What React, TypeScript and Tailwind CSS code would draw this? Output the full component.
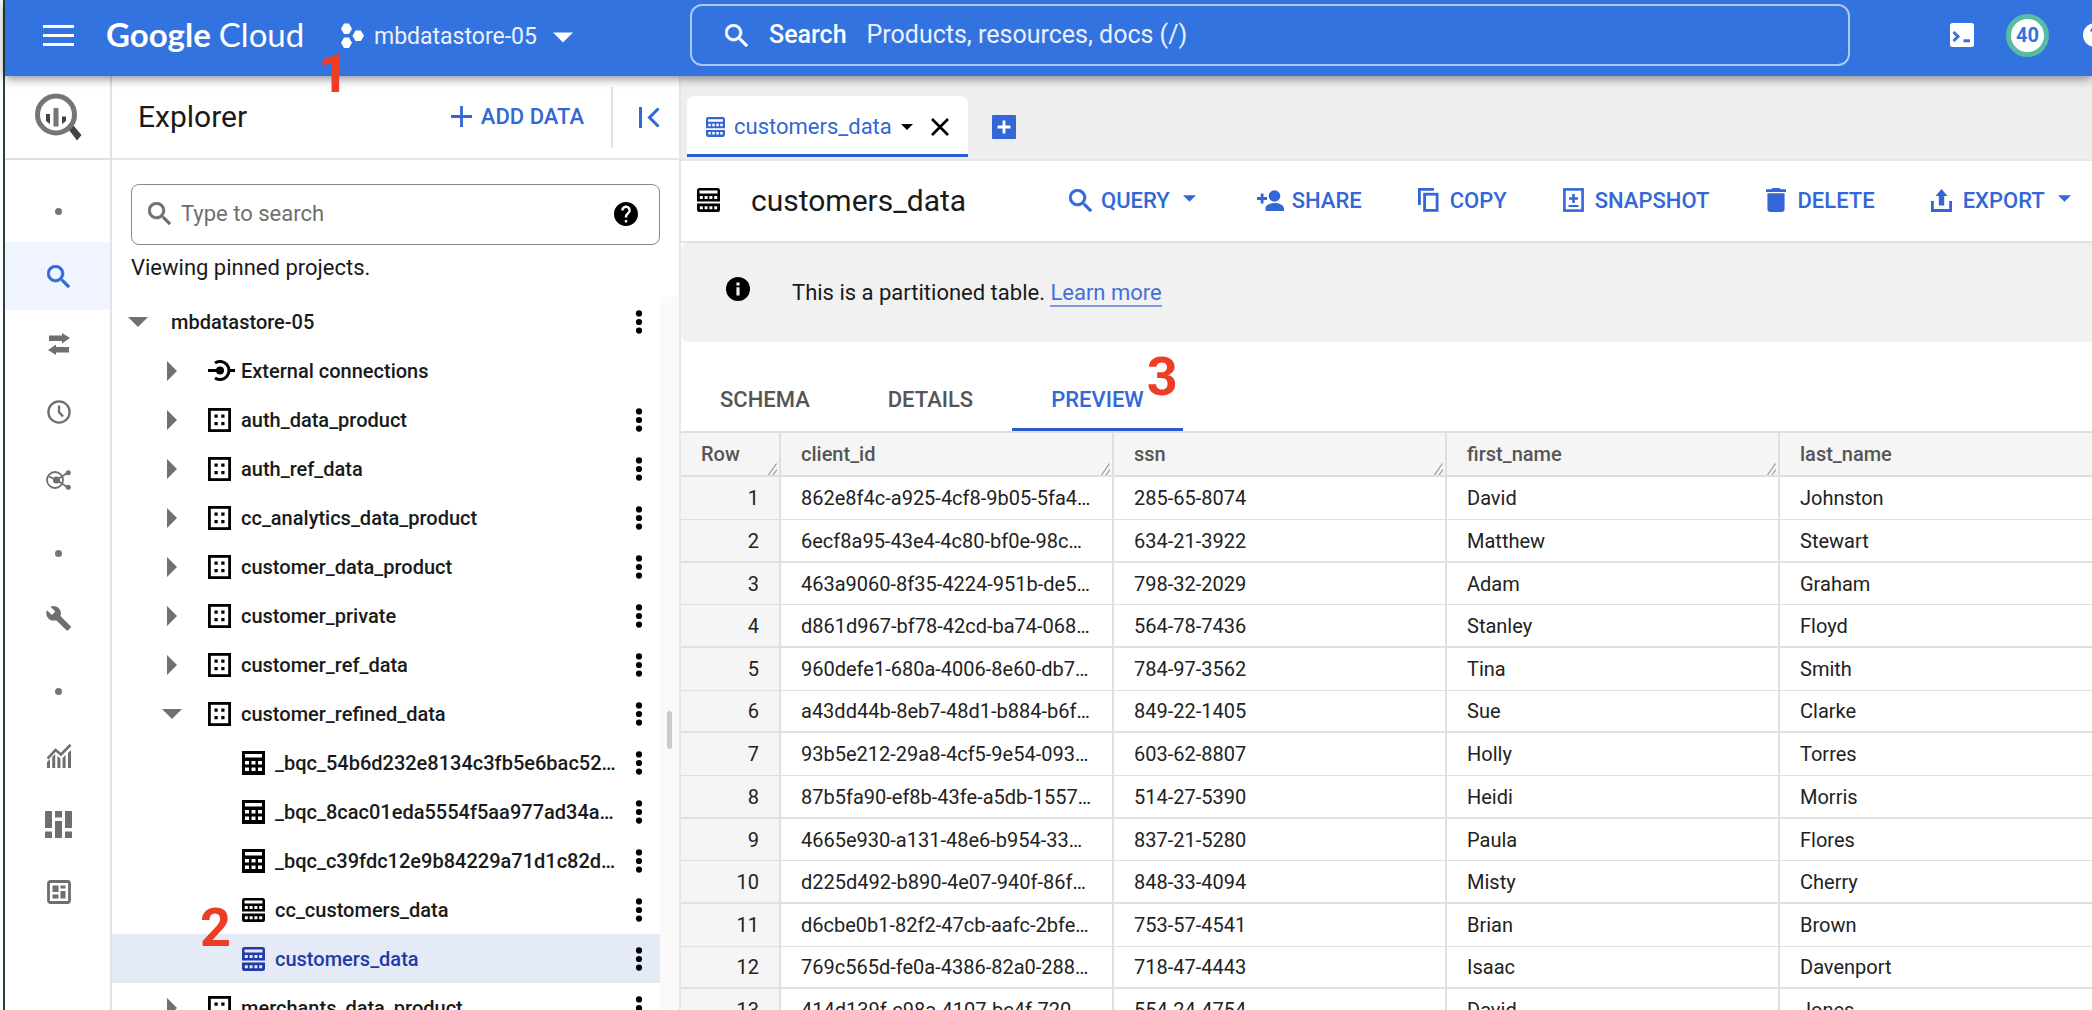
import React from "react";

type IconProps = { className?: string };

const SEARCH_PATH =
  "M15.5 14h-.79l-.28-.27A6.471 6.471 0 0 0 16 9.5 6.5 6.5 0 1 0 9.5 16c1.61 0 3.09-.59 4.23-1.57l.27.28v.79l5 4.99L20.49 19l-4.99-5zm-6 0C7.01 14 5 11.99 5 9.5S7.01 5 9.5 5 14 7.01 14 9.5 11.99 14 9.5 14z";

function SearchIcon({ className = "" }: IconProps) {
  return (
    <svg viewBox="3 3 17.5 17.5" className={`size-[23px] shrink-0 ${className}`} fill="currentColor" aria-hidden="true">
      <path d={SEARCH_PATH} stroke="currentColor" strokeWidth="0.4" />
    </svg>
  );
}

function CaretDown({ className = "" }: IconProps) {
  return (
    <svg viewBox="0 0 20 10" className={`shrink-0 ${className}`} fill="currentColor" aria-hidden="true">
      <path d="M0 0h20L10 10z" />
    </svg>
  );
}

function CaretRight() {
  return (
    <svg viewBox="0 0 10 20" className="h-5 w-[10px]" fill="currentColor" aria-hidden="true">
      <path d="M0 0v20l10-10z" />
    </svg>
  );
}

function HelpIcon({ className = "" }: IconProps) {
  return (
    <svg viewBox="2 2 20 20" className={`size-6 shrink-0 ${className}`} fill="currentColor" aria-hidden="true">
      <path d="M12 2C6.48 2 2 6.48 2 12s4.48 10 10 10 10-4.48 10-10S17.52 2 12 2zm1 17h-2v-2h2v2zm2.07-7.75l-.9.92C13.45 12.9 13 13.5 13 15h-2v-.5c0-1.1.45-2.1 1.17-2.83l1.24-1.26c.37-.36.59-.86.59-1.41 0-1.1-.9-2-2-2s-2 .9-2 2H8c0-2.21 1.79-4 4-4s4 1.79 4 4c0 .88-.36 1.68-.93 2.25z" />
    </svg>
  );
}

function InfoIcon() {
  return (
    <svg viewBox="2 2 20 20" className="size-6 shrink-0" aria-hidden="true">
      <circle cx="12" cy="12" r="10" fill="#000" />
      <path d="M10.700 6.500h2.600V9h-2.600zM10.700 10.600h2.600v6.900h-2.600z" fill="#f1f1f1" />
    </svg>
  );
}

function MoreDots() {
  return (
    <svg viewBox="0 0 8 24" className="h-6 w-2" fill="currentColor" aria-hidden="true">
      <circle cx="4" cy="3.400" r="3.100" />
      <circle cx="4" cy="12" r="3.100" />
      <circle cx="4" cy="20.600" r="3.100" />
    </svg>
  );
}

function DatasetIcon() {
  return (
    <svg viewBox="0 0 23 24" className="h-6 w-[23px] shrink-0" aria-hidden="true">
      <rect x="1.400" y="1.400" width="20.200" height="21.200" fill="none" stroke="currentColor" strokeWidth="2.800" />
      <path d="M6.500 6.500h3.200v3.200h-3.200zM13.300 6.500h3.200v3.200h-3.200zM6.500 14h3.200v3.200h-3.200zM13.300 14h3.200v3.200h-3.200z" fill="currentColor" />
    </svg>
  );
}

function TableIcon() {
  return (
    <svg viewBox="0 0 23 24" className="h-6 w-[23px] shrink-0" fill="currentColor" fillRule="evenodd" aria-hidden="true">
      <path d="M0 0h23v24H0zM3 3v3.500h17V3zM3 10v3.500h4V10zM9.500 10v3.500h4V10zM16 10v3.500h4V10zM3 16.500V20h4v-3.500zM9.500 16.500V20h4v-3.500zM16 16.500V20h4v-3.500z" />
    </svg>
  );
}

function PartitionedIcon({ className = "h-6 w-[23px]" }: IconProps) {
  return (
    <svg viewBox="0 0 23 24" className={`shrink-0 ${className}`} fill="currentColor" fillRule="evenodd" aria-hidden="true">
      <path d="M2.500 0h18A2.500 2.500 0 0 1 23 2.500V13.500H0V2.500A2.500 2.500 0 0 1 2.500 0zM2.500 2.500v3h18v-3zM2.800 8v3h3V8zM7.600 8v3h3V8zM12.400 8v3h3V8zM17.200 8v3h3V8z" />
      <path d="M0 15.500h23v6a2.500 2.500 0 0 1-2.500 2.500h-18A2.500 2.500 0 0 1 0 21.500zM2.800 18.200v3h3v-3zM7.600 18.200v3h3v-3zM12.400 18.200v3h3v-3zM17.200 18.200v3h3v-3z" />
    </svg>
  );
}

function ExternalIcon() {
  return (
    <svg viewBox="0 0 27 21" className="h-[21px] w-[27px] shrink-0" fill="none" stroke="currentColor" strokeWidth="3" aria-hidden="true">
      <path d="M0 10.500h11M20 10.500h7" />
      <path d="M7 3A9 9 0 1 1 7 18" />
      <circle cx="12" cy="10.500" r="4" fill="currentColor" stroke="none" />
    </svg>
  );
}

function BigQueryLogo() {
  return (
    <svg viewBox="0 0 47 49" className="h-[49px] w-[47px]" aria-hidden="true">
      <path d="M34 37l4.500-4.500L46.500 42l-4.500 5.500z" fill="#424242" />
      <circle cx="21" cy="21.500" r="18.500" fill="#fff" stroke="#757575" strokeWidth="5" />
      <path d="M11 21h4v10l-4-3z" fill="#424242" />
      <rect x="18.500" y="15" width="5" height="18.500" fill="#757575" />
      <path d="M27 23.500h4V28l-4 3z" fill="#424242" />
    </svg>
  );
}

const railIcons: Record<string, React.ReactNode> = {
  transfers: (
    <svg viewBox="0 0 22 22" className="size-[22px]" fill="currentColor" aria-hidden="true">
      <path d="M1 2.500h13V0l8 5-8 5.500V8H1zM21 14H8v-2.500l-8 5.500 8 5v-2.500h13z" />
    </svg>
  ),
  scheduled: (
    <svg viewBox="0 0 24 24" className="size-6" fill="none" stroke="currentColor" strokeWidth="2.300" aria-hidden="true">
      <circle cx="12" cy="12" r="10.600" />
      <path d="M12 5.500V12l4 4.500" />
    </svg>
  ),
  hub: (
    <svg viewBox="0 0 25 20" className="h-5 w-[25px]" fill="none" stroke="currentColor" strokeWidth="1.800" aria-hidden="true">
      <circle cx="9" cy="10" r="8" />
      <circle cx="10.500" cy="10" r="3.600" fill="currentColor" stroke="none" />
      <path d="M3 6.500l7.500 3.500L22 2.500M10.500 10L22 17.500" />
      <circle cx="22.300" cy="2.700" r="2.500" fill="currentColor" stroke="none" />
      <circle cx="22.300" cy="17.300" r="2.500" fill="currentColor" stroke="none" />
    </svg>
  ),
  admin: (
    <svg viewBox="0.700 1 22.300 22.300" className="size-[25px]" fill="currentColor" aria-hidden="true">
      <path d="M22.700 19l-9.100-9.100c.9-2.300.4-5-1.500-6.900-2-2-5-2.400-7.400-1.300L9 6 6 9 1.600 4.700C.4 7.100.9 10.100 2.900 12.100c1.900 1.900 4.600 2.400 6.900 1.500l9.100 9.100c.4.4 1 .4 1.400 0l2.300-2.300c.5-.4.5-1.100.1-1.400z" />
    </svg>
  ),
  monitoring: (
    <svg viewBox="0 0 24 24" className="size-6" aria-hidden="true">
      <path d="M0.500 14.500L8.500 6l5.500 4.500L23.500 0.800" fill="none" stroke="currentColor" strokeWidth="2.600" />
      <path d="M0 18l3-3v9H0zM5.200 13l3-3v14h-3zM10.400 12l3 2.500V24h-3zM15.600 14l3-3v13h-3zM21 9l3-3v18h-3z" fill="currentColor" />
    </svg>
  ),
  capacity: (
    <svg viewBox="0 0 27 27" className="size-[27px]" fill="currentColor" aria-hidden="true">
      <path d="M0 0h7v17H0zM0 20.500h7V27H0zM10 0h7v6.500h-7zM10 10h7v17h-7zM20 0h7v17h-7zM20 20.500h7V27h-7z" />
    </svg>
  ),
  engine: (
    <svg viewBox="0 0 24 24" className="size-6" fill="currentColor" aria-hidden="true">
      <rect x="1.500" y="1.500" width="21" height="21" rx="2" fill="none" stroke="currentColor" strokeWidth="2.800" />
      <path d="M5.500 5.500h6v6.500h-6zM5.500 14.500h6v4h-6zM13.500 5.500h5v3h-5zM13.500 11h5v7.500h-5z" />
    </svg>
  ),
};

const rail = [
  { id: "search", label: "SQL workspace" },
  { id: "transfers", label: "Data transfers" },
  { id: "scheduled", label: "Scheduled queries" },
  { id: "hub", label: "Analytics Hub" },
  { id: "dot-1", label: "" },
  { id: "admin", label: "Administration" },
  { id: "dot-2", label: "" },
  { id: "monitoring", label: "Monitoring" },
  { id: "capacity", label: "Capacity management" },
  { id: "engine", label: "BI Engine" },
];

function Callout({ n, className }: { n: string; className: string }) {
  return (
    <span className={`pointer-events-none absolute z-30 text-[54px] leading-none font-bold text-[#ee3d25] ${className}`}>
      {n}
    </span>
  );
}

type Node = {
  label: string;
  level: 0 | 1 | 2;
  icon?: "external" | "dataset" | "table" | "partitioned";
  open?: boolean;
  menu?: boolean;
  selected?: boolean;
};

const tree: Node[] = [
  { label: "mbdatastore-05", level: 0, open: true, menu: true },
  { label: "External connections", level: 1, icon: "external" },
  { label: "auth_data_product", level: 1, icon: "dataset", menu: true },
  { label: "auth_ref_data", level: 1, icon: "dataset", menu: true },
  { label: "cc_analytics_data_product", level: 1, icon: "dataset", menu: true },
  { label: "customer_data_product", level: 1, icon: "dataset", menu: true },
  { label: "customer_private", level: 1, icon: "dataset", menu: true },
  { label: "customer_ref_data", level: 1, icon: "dataset", menu: true },
  { label: "customer_refined_data", level: 1, icon: "dataset", open: true, menu: true },
  { label: "_bqc_54b6d232e8134c3fb5e6bac52…", level: 2, icon: "table", menu: true },
  { label: "_bqc_8cac01eda5554f5aa977ad34a…", level: 2, icon: "table", menu: true },
  { label: "_bqc_c39fdc12e9b84229a71d1c82d…", level: 2, icon: "table", menu: true },
  { label: "cc_customers_data", level: 2, icon: "partitioned", menu: true },
  { label: "customers_data", level: 2, icon: "partitioned", menu: true, selected: true },
  { label: "merchants_data_product", level: 1, icon: "dataset", menu: true },
];

function TreeRow({ node }: { node: Node }) {
  const indent = node.level === 0 ? "pl-[14px]" : node.level === 1 ? "pl-12" : "pl-[130px]";
  return (
    <li className={`relative flex h-[49px] shrink-0 items-center pr-[14px] ${indent} ${node.selected ? "bg-[#e5eaf7]" : ""}`}>
      {node.level < 2 && (
        <button type="button" aria-label={`Toggle ${node.label}`} className="flex w-6 shrink-0 items-center justify-center text-[#707070]">
          {node.open ? <CaretDown className="h-[10px] w-5" /> : <CaretRight />}
        </button>
      )}
      {node.level === 1 && <span className="w-[22px] shrink-0" />}
      <button
        type="button"
        className={`flex min-w-0 flex-1 items-center text-left text-xl font-medium whitespace-nowrap ${node.selected ? "text-[#1f3aa9]" : "text-[#1a1a1a]"} ${node.level === 0 ? "pl-[21px]" : ""}`}
      >
        {node.icon && (
          <span className={`flex shrink-0 items-center ${node.level === 1 ? "w-[35px] pl-[2px]" : "w-[33px]"} ${node.selected ? "" : "text-black"}`}>
            {node.icon === "external" && <ExternalIcon />}
            {node.icon === "dataset" && <DatasetIcon />}
            {node.icon === "table" && <TableIcon />}
            {node.icon === "partitioned" && <PartitionedIcon />}
          </span>
        )}
        <span>{node.label}</span>
      </button>
      {node.menu && (
        <button type="button" aria-label={`Actions for ${node.label}`} className="flex w-[15px] shrink-0 justify-center text-black">
          <MoreDots />
        </button>
      )}
      {node.selected && <Callout n="2" className="-top-[33px] left-[88px]" />}
    </li>
  );
}

const actions: { label: string; icon: React.ReactNode; caret?: boolean }[] = [
  { label: "QUERY", icon: <SearchIcon />, caret: true },
  {
    label: "SHARE",
    icon: (
      <svg viewBox="0 0 27 21" className="h-[21px] w-[27px] shrink-0" fill="currentColor" aria-hidden="true">
        <circle cx="17.500" cy="6" r="5.800" />
        <path d="M8.500 21v-2.500c0-3.500 5-5.500 9.200-5.500s9.300 2 9.300 5.500V21zM3.700 3.500h2.800v3.600H10v2.800H6.500v3.600H3.700V9.900H0V7.100h3.700z" />
      </svg>
    ),
  },
  {
    label: "COPY",
    icon: (
      <svg viewBox="0 0 21 24" className="h-6 w-[21px]" fill="none" stroke="currentColor" strokeWidth="2.800" aria-hidden="true">
        <path d="M1.400 17V1.400H16" />
        <rect x="6.600" y="6.200" width="12.500" height="16.200" />
      </svg>
    ),
  },
  {
    label: "SNAPSHOT",
    icon: (
      <svg viewBox="0 0 21 24" className="h-6 w-[21px]" fill="none" stroke="currentColor" strokeWidth="2.600" aria-hidden="true">
        <rect x="1.400" y="1.400" width="18.200" height="21.200" />
        <path d="M10.500 6v9M6 10.500h9" />
        <path d="M5.500 18h10" strokeWidth="2" />
      </svg>
    ),
  },
  {
    label: "DELETE",
    icon: (
      <svg viewBox="5 3 14 18" className="h-6 w-5" preserveAspectRatio="none" fill="currentColor" aria-hidden="true">
        <path d="M6 19c0 1.100.9 2 2 2h8c1.100 0 2-.9 2-2V7H6v12zM19 4h-3.500l-1-1h-5l-1 1H5v2h14V4z" />
      </svg>
    ),
  },
  {
    label: "EXPORT",
    icon: (
      <svg viewBox="0 0 21 23" className="h-[23px] w-[21px]" fill="currentColor" aria-hidden="true">
        <path d="M10.500 0l6 7h-3.300v9.500H7.800V7H4.500z" />
        <path d="M1.400 12v9.500h18.200V12" fill="none" stroke="currentColor" strokeWidth="2.800" />
      </svg>
    ),
    caret: true,
  },
];

const columns = ["client_id", "ssn", "first_name", "last_name"];

const rows = [
  ["862e8f4c-a925-4cf8-9b05-5fa4…", "285-65-8074", "David", "Johnston"],
  ["6ecf8a95-43e4-4c80-bf0e-98c…", "634-21-3922", "Matthew", "Stewart"],
  ["463a9060-8f35-4224-951b-de5…", "798-32-2029", "Adam", "Graham"],
  ["d861d967-bf78-42cd-ba74-068…", "564-78-7436", "Stanley", "Floyd"],
  ["960defe1-680a-4006-8e60-db7…", "784-97-3562", "Tina", "Smith"],
  ["a43dd44b-8eb7-48d1-b884-b6f…", "849-22-1405", "Sue", "Clarke"],
  ["93b5e212-29a8-4cf5-9e54-093…", "603-62-8807", "Holly", "Torres"],
  ["87b5fa90-ef8b-43fe-a5db-1557…", "514-27-5390", "Heidi", "Morris"],
  ["4665e930-a131-48e6-b954-33…", "837-21-5280", "Paula", "Flores"],
  ["d225d492-b890-4e07-940f-86f…", "848-33-4094", "Misty", "Cherry"],
  ["d6cbe0b1-82f2-47cb-aafc-2bfe…", "753-57-4541", "Brian", "Brown"],
  ["769c565d-fe0a-4386-82a0-288…", "718-47-4443", "Isaac", "Davenport"],
  ["414d139f-c98a-4107-bc4f-720…", "554-24-4754", "David", "Jones"],
];

function ResizeGrip() {
  return (
    <svg viewBox="0 0 9 12" className="absolute right-[2px] bottom-0 h-3 w-[9px]" fill="none" stroke="#999" strokeWidth="1.200" aria-hidden="true">
      <path d="M0.500 12L8.500 0.500M5 12l4-5.500" />
    </svg>
  );
}

function TopBar() {
  return (
    <header className="relative z-20 flex h-[76px] shrink-0 items-center bg-[#3273e0] text-white shadow-[0_2px_10px_rgba(0,0,0,0.5)]">
      <div className="flex w-[685px] shrink-0 items-center pb-[2px] pl-[38px]">
        <button type="button" aria-label="Main menu" className="mb-1 flex w-[31px] flex-col gap-[6px]">
          <span className="h-[3px] bg-white" />
          <span className="h-[3px] bg-white" />
          <span className="h-[3px] bg-white" />
        </button>
        <a href="#" className="mb-[6px] ml-[32px] w-[197px] font-['Lato',sans-serif] text-[33px] leading-10 font-bold whitespace-nowrap">
          Google <span className="font-normal">Cloud</span>
        </a>
        <button type="button" className="relative ml-[38px] flex items-center text-[23px] leading-8 text-white/90">
          <svg viewBox="0 0 23 26" className="mb-[2px] h-[26px] w-[23px] text-white" fill="currentColor" aria-hidden="true">
            <path d="M3 0.500h5l3 5.200-3 5.300H3L0 5.700zM3 14.500h5l3 5.300L8 25H3l-3-5.200zM14.500 7.500h5.300L23 12.800l-3.200 5.300h-5.300l-3-5.300z" />
          </svg>
          <span className="ml-[10px]">mbdatastore-05</span>
          <CaretDown className="ml-4 h-[11px] w-5 text-white" />
          <Callout n="1" className="top-[26px] -left-[23px]" />
        </button>
      </div>
      <label className="mb-[6px] flex h-[62px] min-w-0 flex-1 items-center rounded-xl border-2 border-white/60 px-[33px]">
        <SearchIcon />
        <span className="ml-[21px] text-[25px] font-medium text-white">Search</span>
        <input
          type="text"
          placeholder="Products, resources, docs (/)"
          className="ml-5 min-w-0 flex-1 bg-transparent text-[25px] outline-none placeholder:text-white/90"
        />
      </label>
      <div className="flex w-[242px] shrink-0 items-center overflow-hidden pb-[6px] pl-[100px]">
        <button type="button" aria-label="Activate Cloud Shell" className="shrink-0">
          <svg viewBox="0 0 24 24" className="size-6" aria-hidden="true">
            <rect width="24" height="24" rx="2.500" fill="#fff" />
            <path d="M3.500 9l4.500 4.500L3.500 18" fill="none" stroke="#3273e0" strokeWidth="3" />
            <path d="M13.500 17.800H20" stroke="#3273e0" strokeWidth="3" />
          </svg>
        </button>
        <button type="button" aria-label="40 notifications" className="ml-[32px] flex size-[43px] shrink-0 items-center justify-center rounded-full border-[5px] border-[#57bba5] bg-white text-xl font-bold text-[#3273e0]">
          40
        </button>
        <button type="button" aria-label="Help" className="ml-[34px] shrink-0">
          <HelpIcon className="text-white" />
        </button>
      </div>
    </header>
  );
}

function Rail() {
  return (
    <nav aria-label="BigQuery" className="flex w-[107px] shrink-0 flex-col border-r-2 border-[#e2e2e2] bg-white text-[#6f6f6f]">
      <a href="#" aria-label="BigQuery" className="flex h-[84px] shrink-0 items-center border-b-2 border-[#e0e0e0] pl-[30px]">
        <BigQueryLogo />
      </a>
      <div className="flex h-[82px] shrink-0 items-center justify-center pt-5 pl-[2px]">
        <span className="size-[7px] rounded-full bg-[#757575]" />
      </div>
      {rail.map((item) =>
        item.label === "" ? (
          <div key={item.id} className="flex h-[70px] shrink-0 items-center justify-center pt-2 pl-[2px]">
            <span className="size-[7px] rounded-full bg-[#757575]" />
          </div>
        ) : (
          <button
            type="button"
            key={item.id}
            aria-label={item.label}
            className={`flex h-[68px] shrink-0 items-center justify-center pl-[2px] ${item.id === "search" ? "bg-[#f0f4fe] text-[#3367d6]" : ""}`}
          >
            {item.id === "search" ? <SearchIcon /> : railIcons[item.id]}
          </button>
        ),
      )}
    </nav>
  );
}

function Explorer() {
  return (
    <aside className="flex w-[569px] shrink-0 flex-col border-r-2 border-[#e6e6e6] bg-white">
      <div className="flex h-[84px] shrink-0 items-center border-b-2 border-[#e6e6e6] pl-[26px] text-[#3367d6]">
        <h2 className="flex-1 pb-[2px] text-[30px] text-[#1a1a1a]">Explorer</h2>
        <button type="button" className="flex items-center gap-[9px] pb-[2px] text-[22px] font-medium">
          <svg viewBox="0 0 21 21" className="size-[21px]" stroke="currentColor" strokeWidth="2.800" aria-hidden="true">
            <path d="M10.500 0v21M0 10.500h21" />
          </svg>
          ADD DATA
        </button>
        <span className="ml-[27px] h-[61px] w-[2px] bg-[#e2e2e2]" />
        <button type="button" aria-label="Collapse explorer" className="mr-[19px] ml-[26px]">
          <svg viewBox="0 0 21 21" className="size-[21px]" fill="none" stroke="currentColor" strokeWidth="3" aria-hidden="true">
            <path d="M1.500 0v21M19.500 1.500l-9 9 9 9" />
          </svg>
        </button>
      </div>
      <div className="shrink-0 px-[19px] pt-6">
        <label className="flex h-[61px] items-center rounded-lg border border-[#868b90] pr-[21px] pb-[2px] pl-4 text-[#6f6f6f]">
          <SearchIcon />
          <input type="text" aria-label="Search resources" placeholder="Type to search" className="ml-[10px] min-w-0 flex-1 text-[22px] outline-none placeholder:text-[#6f6f6f]" />
          <HelpIcon className="text-black" />
        </label>
        <p className="h-[52px] pt-[7px] text-[22px] leading-8 text-[#1a1a1a]">Viewing pinned projects.</p>
      </div>
      <div className="flex min-h-0 flex-1">
        <ul className="flex min-w-0 flex-1 flex-col overflow-hidden">
          {tree.map((node) => (
            <TreeRow key={node.label} node={node} />
          ))}
        </ul>
        <div className="flex w-[19px] shrink-0 items-center justify-center bg-[#fafafa] pt-[153px]">
          <span className="h-[38px] w-[5px] rounded-full bg-[#cbcbcb]" />
        </div>
      </div>
    </aside>
  );
}

function PreviewTable() {
  return (
    <table className="w-[1432px] shrink-0 table-fixed border-separate border-spacing-0 text-xl text-[#222]">
      <colgroup>
        <col className="w-[100px]" />
        <col className="w-[333px]" />
        <col className="w-[333px]" />
        <col className="w-[333px]" />
        <col className="w-[333px]" />
      </colgroup>
      <thead>
        <tr className="h-[46px] bg-[#f5f5f5] text-left text-[#555]">
          <th scope="col" className="relative border-y-2 border-r-2 border-[#dedede] px-5 font-medium">
            Row
            <ResizeGrip />
          </th>
          {columns.map((c) => (
            <th key={c} scope="col" className="relative border-y-2 border-r-2 border-[#dedede] px-5 font-medium">
              {c}
              <ResizeGrip />
            </th>
          ))}
        </tr>
      </thead>
      <tbody>
        {rows.map((r, i) => (
          <tr key={r[0]} className="group h-[43px] [&:nth-child(3n)]:h-[42px]">
            <th scope="row" className="border-r-2 border-b border-[#e0e0e0] bg-[#f5f5f5] px-5 text-right font-normal group-even:border-b-2">
              {i + 1}
            </th>
            {r.map((cell) => (
              <td key={cell} className="border-r-2 border-b border-[#e0e0e0] px-5 whitespace-nowrap group-even:border-b-2">
                {cell}
              </td>
            ))}
          </tr>
        ))}
      </tbody>
    </table>
  );
}

function Main() {
  return (
    <main className="flex min-w-0 flex-1 flex-col overflow-hidden bg-white">
      <div className="flex h-[85px] shrink-0 items-end border-b-2 border-[#e6e6e6] bg-[#eeeeee] pb-[2px] pl-[6px]">
        <div className="flex h-[61px] items-center rounded-t-lg border-b-[3px] border-[#2a5bd0] bg-white px-[19px] pt-[3px]">
          <button type="button" className="flex items-center gap-[9px] text-[22px] text-[#3367d6]">
            <PartitionedIcon className="h-5 w-[19px]" />
            customers_data
          </button>
          <button type="button" aria-label="Tab options" className="ml-[9px] text-black">
            <CaretDown className="h-[6px] w-3" />
          </button>
          <button type="button" aria-label="Close tab" className="ml-[18px] text-black">
            <svg viewBox="0 0 18 18" className="size-[18px]" stroke="currentColor" strokeWidth="2.600" aria-hidden="true">
              <path d="M1 1l16 16M17 1L1 17" />
            </svg>
          </button>
        </div>
        <button type="button" aria-label="New tab" className="mb-[18px] ml-6">
          <svg viewBox="0 0 24 24" className="size-6" aria-hidden="true">
            <rect width="24" height="24" rx="1" fill="#3367d6" />
            <path d="M12 5.500v13M5.500 12h13" stroke="#fff" strokeWidth="2.800" />
          </svg>
        </button>
      </div>

      <div className="flex h-[82px] shrink-0 items-center border-b-2 border-[#e2e2e2] pb-[2px] pl-[16px] whitespace-nowrap">
        <PartitionedIcon />
        <h1 className="ml-[31px] w-[317px] shrink-0 text-[30px] text-[#1a1a1a]">customers_data</h1>
        <div className="flex items-center gap-[55px]">
          {actions.map((a) => (
            <button type="button" key={a.label} className={`flex shrink-0 items-center gap-[9px] text-[22px] font-medium text-[#3367d6] ${a.caret ? "mr-2" : ""}`}>
              <span className="flex w-6 shrink-0 justify-center">{a.icon}</span>
              {a.label}
              {a.caret && <CaretDown className="mb-1 ml-[4px] h-[7px] w-[13px]" />}
            </button>
          ))}
        </div>
      </div>

      <div className="flex h-[99px] shrink-0 items-center rounded-l-lg bg-[#f1f1f1] pl-[45px] text-[22px] text-[#1a1a1a]">
        <span className="mb-2">
          <InfoIcon />
        </span>
        <p className="ml-[42px]">
          This is a partitioned table.{" "}
          <a href="#" className="border-b-2 border-[#7b9be3] text-[#4470d8]">
            Learn more
          </a>
        </p>
      </div>

      <div role="tablist" className="flex h-[89px] shrink-0 text-[22px] font-medium text-[#555]">
        <button type="button" role="tab" aria-selected="false" className="px-[39px] pt-[26px]">
          SCHEMA
        </button>
        <button type="button" role="tab" aria-selected="false" className="px-[39px] pt-[26px]">
          DETAILS
        </button>
        <button type="button" role="tab" aria-selected="true" className="relative border-b-[3px] border-[#2a5bd0] px-[39px] pt-[29px] text-[#3367d6]">
          PREVIEW
          <Callout n="3" className="top-2 right-[5px]" />
        </button>
      </div>

      <PreviewTable />
    </main>
  );
}

export default function App() {
  return (
    <div className="h-screen overflow-hidden bg-white pl-[3px] font-['Roboto',sans-serif]">
      <div className="flex h-full flex-col border-l-2 border-[#24463d]">
        <TopBar />
        <div className="flex min-h-0 flex-1">
          <Rail />
          <Explorer />
          <Main />
        </div>
      </div>
    </div>
  );
}
